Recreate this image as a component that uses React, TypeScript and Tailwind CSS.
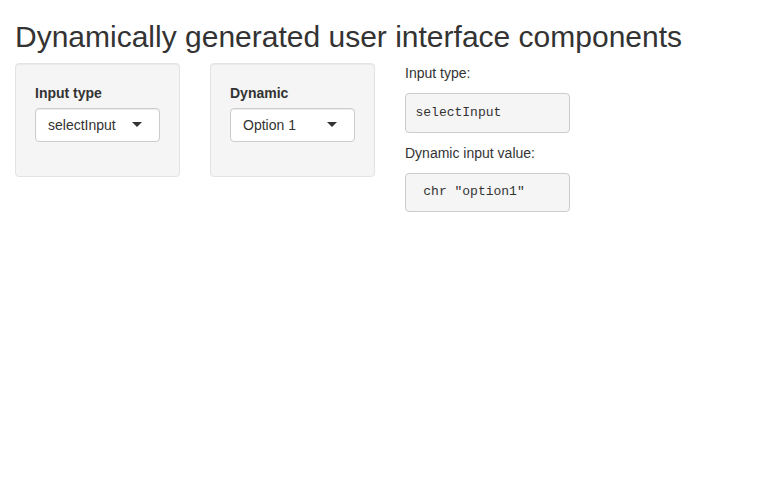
import React from "react";

function Select({ value }: { value: string }) {
  return (
    <div className="relative h-[34px] w-full rounded-[4px] border border-[#cccccc] bg-white px-3 py-[6px] text-[14px] leading-[20px] text-[#333333] shadow-[inset_0_1px_1px_rgba(0,0,0,0.075)]">
      <span>{value}</span>
      <span className="absolute right-[17px] top-1/2 mt-[-3px] h-0 w-0 border-x-[5px] border-t-[5px] border-x-transparent border-t-[#333333]" />
    </div>
  );
}

function Well({ label, value }: { label: string; value: string }) {
  return (
    <div className="mb-5 rounded-[4px] border border-[#e3e3e3] bg-[#f5f5f5] p-[19px] shadow-[inset_0_1px_1px_rgba(0,0,0,0.05)]">
      <div className="mb-[15px]">
        <div className="mb-[5px] text-[14px] font-bold leading-[20px]">{label}</div>
        <Select value={value} />
      </div>
    </div>
  );
}

function Pre({ children }: { children: React.ReactNode }) {
  return (
    <pre
      className="mb-[10px] whitespace-pre rounded-[4px] border border-[#cccccc] bg-[#f5f5f5] p-[9.5px] text-[13px] leading-[1.42857] text-[#333333]"
      style={{ fontFamily: '"Liberation Mono", Menlo, Consolas, monospace' }}
    >
      {children}
    </pre>
  );
}

export default function App() {
  return (
    <div
      className="min-h-[493px] bg-white px-[15px] text-[14px] leading-[20px] text-[#333333]"
      style={{ fontFamily: '"Liberation Sans", Helvetica, Arial, sans-serif' }}
    >
      <h2 className="mb-[10px] mt-5 text-[30px] font-medium leading-[1.1]">
        Dynamically generated user interface components
      </h2>
      <div className="mx-[-15px] flex">
        <div className="w-[195px] px-[15px]">
          <Well label="Input type" value="selectInput" />
        </div>
        <div className="w-[195px] px-[15px]">
          <Well label="Dynamic" value="Option 1" />
        </div>
        <div className="w-[195px] px-[15px]">
          <p className="mb-[10px]">Input type:</p>
          <Pre>selectInput</Pre>
          <p className="mb-[10px]">Dynamic input value:</p>
          <Pre>{' chr "option1"'}</Pre>
        </div>
      </div>
    </div>
  );
}
